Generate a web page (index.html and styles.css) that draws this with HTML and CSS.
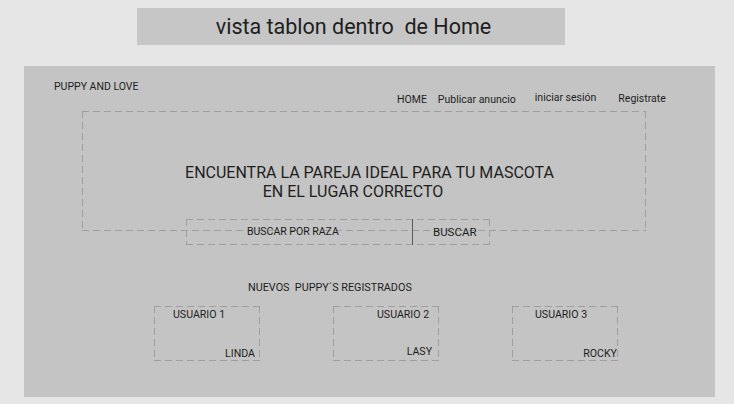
FILE: index.html
```html
<!DOCTYPE html>
<html lang="es">
<head>
    <meta charset="UTF-8">
    <meta name="viewport" content="width=device-width, initial-scale=1.0">
    <title>vista tablon dentro de Home</title>
    <link rel="stylesheet" href="styles.css">
</head>
<body>

    <!-- Titulo del boceto -->
    <div class="sheet-title">vista tablon dentro&nbsp; de Home</div>

    <!-- Pagina Home -->
    <div class="page">
        <div class="header">
            <div class="brand">PUPPY AND LOVE</div>
            <nav class="nav">
                <a href="#" class="nav-home">HOME</a>
                <a href="#" class="nav-post">Publicar anuncio</a>
                <a href="#" class="nav-login">iniciar sesión</a>
                <a href="#" class="nav-signup">Registrate</a>
            </nav>
        </div>

        <div class="hero dashed">
            <div class="hero-line first">ENCUENTRA LA PAREJA IDEAL PARA TU MASCOTA</div>
            <div class="hero-line second">EN EL LUGAR CORRECTO</div>
        </div>

        <div class="search dashed">
            <div class="search-breed">BUSCAR POR RAZA</div>
            <div class="search-btn">BUSCAR</div>
        </div>

        <h3 class="section-title">NUEVOS&nbsp; PUPPY´S REGISTRADOS</h3>

        <div class="cards">
            <div class="card dashed card-1">
                <span class="card-user">USUARIO 1</span>
                <span class="card-name">LINDA</span>
            </div>
            <div class="card dashed card-2">
                <span class="card-user">USUARIO 2</span>
                <span class="card-name">LASY</span>
            </div>
            <div class="card dashed card-3">
                <span class="card-user">USUARIO 3</span>
                <span class="card-name">ROCKY</span>
            </div>
        </div>
    </div>

</body>
</html>
```

FILE: styles.css
```css
/* General */
body {
    margin: 0;
    padding: 0;
    background-color: #e6e6e6;
    font-family: Roboto, "Liberation Sans", Arial, sans-serif;
    color: #1e1e1e;
}

/* Sketch title */
.sheet-title {
    margin: 8px 0 0 137px;
    width: 428px;
    height: 37px;
    box-sizing: border-box;
    padding-left: 5px;
    line-height: 37px;
    background: #c6c6c6;
    text-align: center;
    font-size: 21.5px;
}

/* Page frame */
.page {
    margin: 21px 0 0 24px;
    width: 691px;
    height: 331px;
    box-sizing: border-box;
    padding: 14px 0 0 30px;
    background: #c4c4c4;
}

/* Dashed boxes */
.dashed {
    background-image:
        repeating-linear-gradient(90deg, #9f9f9f 0 7px, transparent 7px 11px),
        repeating-linear-gradient(90deg, #9f9f9f 0 7px, transparent 7px 11px),
        repeating-linear-gradient(180deg, #9f9f9f 0 7px, transparent 7px 11px),
        repeating-linear-gradient(180deg, #9f9f9f 0 7px, transparent 7px 11px);
    background-size: 100% 1px, 100% 1px, 1px 100%, 1px 100%;
    background-position: top left, bottom left, top left, top right;
    background-repeat: no-repeat;
    box-sizing: border-box;
}

/* Header */
.header {
    display: flex;
    align-items: flex-start;
    font-size: 10.5px;
    line-height: 13px;
}

.brand {
    width: 343px;
}

.nav {
    display: flex;
    margin-top: 13px;
}

.nav a {
    color: #1e1e1e;
    text-decoration: none;
}

.nav-post {
    margin-left: 11px;
}

.nav-login {
    margin-left: 19px;
    position: relative;
    top: -2px;
}

.nav-signup {
    margin-left: 22px;
    position: relative;
    top: -1px;
}

/* Hero */
.hero {
    margin: 5px 0 0 28px;
    width: 564px;
    height: 120px;
    padding-top: 52px;
    font-size: 16px;
    line-height: 19px;
}

.hero-line {
    text-align: center;
}

.hero-line.first {
    padding-left: 11px;
}

.hero-line.second {
    padding-right: 22px;
}

/* Search */
.search {
    display: flex;
    margin: -12px 0 0 132px;
    width: 304px;
    height: 26px;
    font-size: 10.5px;
    line-height: 26px;
}

.search-breed {
    width: 227px;
    padding-left: 61px;
    box-sizing: border-box;
    border-right: 1px solid #5a5a5a;
}

.search-btn {
    padding-left: 20px;
    font-size: 11.5px;
}

/* New puppies */
.section-title {
    margin: 36px 0 0 194px;
    font-size: 10.8px;
    font-weight: normal;
    line-height: 13px;
}

.cards {
    display: flex;
    gap: 73px;
    margin: 12px 0 0 100px;
}

.card {
    display: flex;
    flex-direction: column;
    justify-content: space-between;
    width: 106px;
    height: 55px;
    padding: 2px 0 1px;
    font-size: 10.6px;
    line-height: 13px;
}

.card-name {
    align-self: flex-end;
}

.card-1 .card-user { padding-left: 19px; }
.card-1 .card-name { padding-right: 5px; }

.card-2 .card-user { padding-left: 44px; }
.card-2 .card-name { padding-right: 7px; margin-bottom: 2px; }

.card-3 .card-user { padding-left: 23px; }
.card-3 .card-name { padding-right: 1px; }
```
